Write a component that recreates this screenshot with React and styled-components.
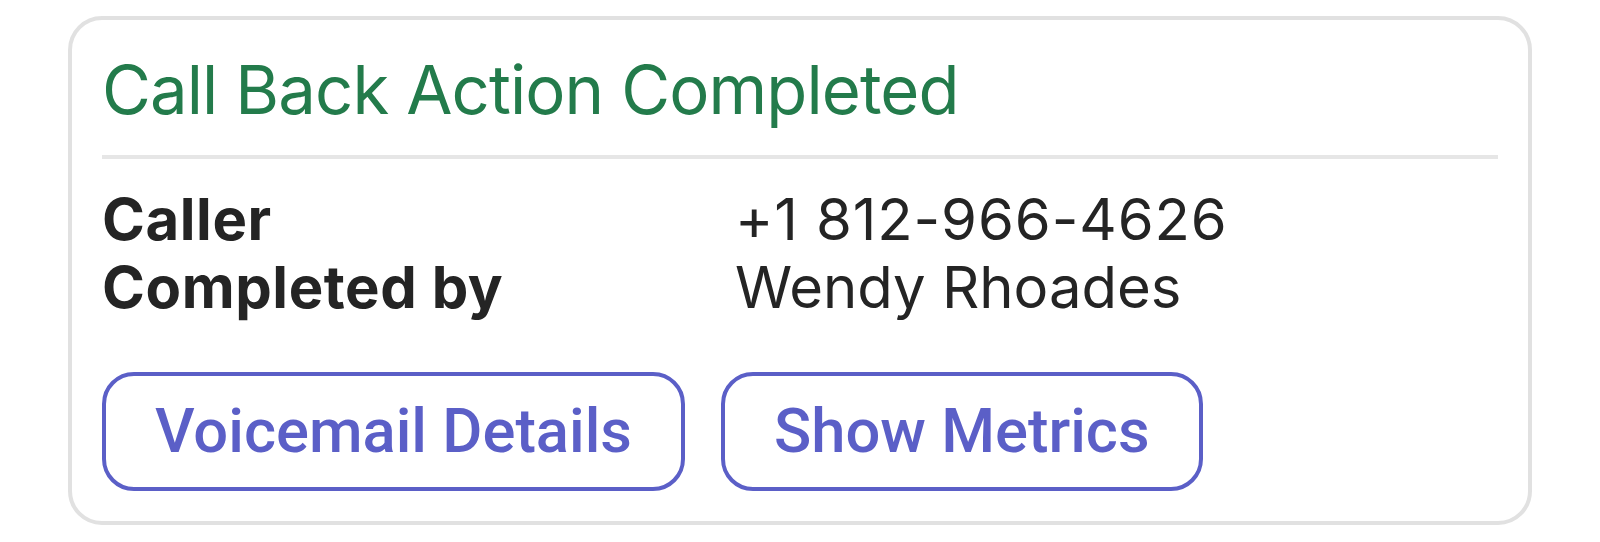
import React from "react";
import styled, { createGlobalStyle } from "styled-components";

const Global = createGlobalStyle`
  html, body { margin: 0; padding: 0; background: #ffffff; }
  body { font-family: Inter, "Noto Sans", sans-serif; }
`;

const Page = styled.div`
  padding: 16px 0 0 68px;
`;

const Card = styled.section`
  box-sizing: border-box;
  width: 1464px;
  border: 4px solid #e1e1e1;
  border-radius: 34px;
  padding: 30px 30px 30px 30px;
  background: #fff;
`;

const Title = styled.h1`
  margin: 0;
  font-family: Inter, sans-serif;
  font-weight: 400;
  font-size: 67px;
  line-height: 80px;
  color: #237b4b;
  letter-spacing: -0.9px;
`;

const Divider = styled.hr`
  margin: 25px 0 26px;
  border: none;
  height: 4px;
  background: #e6e6e6;
`;

const Facts = styled.dl`
  margin: 0;
  display: grid;
  grid-template-columns: 633px auto;
  font-size: 58px;
  line-height: 68px;
  color: #242424;
`;

const Label = styled.dt`
  margin: 0;
  font-family: Inter, sans-serif;
  font-weight: 700;
  letter-spacing: 0.6px;
`;

const Value = styled.dd`
  margin: 0;
  font-family: Inter, sans-serif;
  font-weight: 400;
  letter-spacing: ${(p) => (p.$numeric ? "0.9px" : "0")};
`;

const Actions = styled.div`
  display: flex;
  gap: 36px;
  margin-top: 51px;
`;

const ActionButton = styled.button`
  box-sizing: border-box;
  height: 119px;
  padding: 0 49px;
  border: 4px solid #5b5fc7;
  border-radius: 32px;
  background: #fff;
  color: #5b5fc7;
  font-family: Roboto, sans-serif;
  font-weight: 500;
  font-size: 61.5px;
  line-height: 1;
  display: flex;
  align-items: center;
  justify-content: center;
  cursor: pointer;
`;

const facts = [
  { label: "Caller", value: "+1 812-966-4626", numeric: true },
  { label: "Completed by", value: "Wendy Rhoades" },
];

export default function App() {
  return (
    <>
      <Global />
      <Page>
        <Card>
          <Title>Call Back Action Completed</Title>
          <Divider />
          <Facts>
            {facts.map((f) => (
              <React.Fragment key={f.label}>
                <Label>{f.label}</Label>
                <Value $numeric={f.numeric}>{f.value}</Value>
              </React.Fragment>
            ))}
          </Facts>
          <Actions>
            <ActionButton>Voicemail Details</ActionButton>
            <ActionButton>Show Metrics</ActionButton>
          </Actions>
        </Card>
      </Page>
    </>
  );
}
